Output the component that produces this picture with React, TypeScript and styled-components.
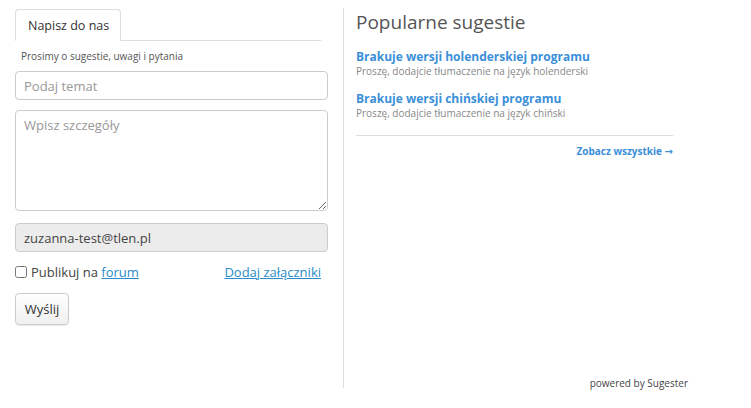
import React from "react";
import styled, { createGlobalStyle } from "styled-components";

const Global = createGlobalStyle`
  html, body { margin: 0; padding: 0; background: #fff; }
  body { font-family: "Open Sans", "DejaVu Sans", sans-serif; color: #333; }
  * { box-sizing: border-box; }
`;

const Page = styled.div`
  display: flex;
  width: 751px;
  height: 408px;
  padding: 8px 0 0 15px;
`;

const Left = styled.div`
  width: 328px;
  padding-right: 15px;
  display: flex;
  flex-direction: column;
`;

const Tabs = styled.div`
  display: flex;
  margin-top: 1px;
  width: 306px;
  border-bottom: 1px solid #ddd;
`;

const Tab = styled.div`
  height: 32px;
  padding: 0 11px 0 12px;
  margin-bottom: -1px;
  border: 1px solid #ddd;
  border-bottom-color: #fff;
  border-radius: 4px 4px 0 0;
  background: #fff;
  font-size: 12.5px;
  color: #333;
  display: flex;
  align-items: center;
`;

const Hint = styled.div`
  font-size: 10px;
  color: #555;
  padding-left: 6px;
  margin-top: 9px;
  line-height: 13px;
`;

const Input = styled.input<{ $filled?: boolean }>`
  width: 313px;
  height: 29px;
  border: 1px solid #ccc;
  border-radius: 4px;
  padding: 0 8px;
  font-family: inherit;
  font-size: 13px;
  color: #444;
  background: ${(p) => (p.$filled ? "#ececec" : "#fff")};
  outline: none;
  &::placeholder { color: #999; }
`;

const TextArea = styled.textarea`
  width: 313px;
  height: 101px;
  border: 1px solid #ccc;
  border-radius: 4px;
  padding: 5px 8px;
  font-family: inherit;
  font-size: 13px;
  resize: vertical;
  outline: none;
  &::placeholder { color: #999; }
`;

const Field = styled.div<{ $gap: number }>`
  margin-top: ${(p) => p.$gap}px;
  display: flex;
`;

const OptionsRow = styled.div`
  width: 306px;
  margin-top: 12px;
  display: flex;
  align-items: center;
  justify-content: space-between;
  font-size: 13px;
  color: #444;
  height: 16px;
`;

const CheckLabel = styled.label`
  display: flex;
  align-items: center;
  gap: 4px;
`;

const Check = styled.input`
  margin: 0;
  width: 12px;
  height: 12px;
`;

const ULink = styled.a`
  color: #2a8bc8;
  text-decoration: underline;
  cursor: pointer;
`;

const Button = styled.button`
  margin-top: 13px;
  width: 54px;
  height: 32px;
  border: 1px solid #ccc;
  border-radius: 4px;
  background: linear-gradient(#fff, #f0f0f0);
  box-shadow: 0 1px 1px rgba(0,0,0,0.08);
  font-family: inherit;
  font-size: 13px;
  color: #333;
  padding: 0;
`;

const Right = styled.div`
  border-left: 1px solid #ddd;
  height: 380px;
  padding: 0 0 0 12px;
  width: 360px;
  display: flex;
  flex-direction: column;
`;

const Heading = styled.h2`
  margin: 1px 0 0;
  font-size: 19px;
  font-weight: 400;
  color: #555;
  line-height: 26px;
`;

const Suggestions = styled.div`
  width: 317px;
  padding-top: 14px;
  display: flex;
  flex-direction: column;
  gap: 13px;
  border-bottom: 1px solid #ddd;
  padding-bottom: 15px;
`;

const Item = styled.div`
  display: flex;
  flex-direction: column;
`;

const ItemTitle = styled.a`
  font-size: 12px;
  font-weight: 700;
  color: #3b8fd9;
  line-height: 15px;
  text-decoration: none;
`;

const ItemDesc = styled.div`
  font-size: 10px;
  color: #888;
  line-height: 14px;
`;

const More = styled.a`
  width: 317px;
  margin-top: 8px;
  text-align: right;
  font-size: 10px;
  font-weight: 700;
  color: #3b8fd9;
  line-height: 14px;
`;

const Powered = styled.div`
  margin-top: auto;
  width: 332px;
  text-align: right;
  font-size: 10px;
  color: #444;
  line-height: 12px;
  margin-bottom: -1px;
`;

export default function App() {
  return (
    <>
      <Global />
      <Page>
        <Left>
          <Tabs>
            <Tab>Napisz do nas</Tab>
          </Tabs>
          <Hint>Prosimy o sugestie, uwagi i pytania</Hint>
          <Field $gap={8}>
            <Input placeholder="Podaj temat" />
          </Field>
          <Field $gap={10}>
            <TextArea placeholder="Wpisz szczegóły" />
          </Field>
          <Field $gap={12}>
            <Input $filled defaultValue="zuzanna-test@tlen.pl" />
          </Field>
          <OptionsRow>
            <CheckLabel>
              <Check type="checkbox" />
              <span>
                Publikuj na <ULink>forum</ULink>
              </span>
            </CheckLabel>
            <ULink>Dodaj załączniki</ULink>
          </OptionsRow>
          <Button>Wyślij</Button>
        </Left>
        <Right>
          <Heading>Popularne sugestie</Heading>
          <Suggestions>
            <Item>
              <ItemTitle>Brakuje wersji holenderskiej programu</ItemTitle>
              <ItemDesc>Proszę, dodajcie tłumaczenie na język holenderski</ItemDesc>
            </Item>
            <Item>
              <ItemTitle>Brakuje wersji chińskiej programu</ItemTitle>
              <ItemDesc>Proszę, dodajcie tłumaczenie na język chiński</ItemDesc>
            </Item>
          </Suggestions>
          <More>Zobacz wszystkie →</More>
          <Powered>powered by Sugester</Powered>
        </Right>
      </Page>
    </>
  );
}
